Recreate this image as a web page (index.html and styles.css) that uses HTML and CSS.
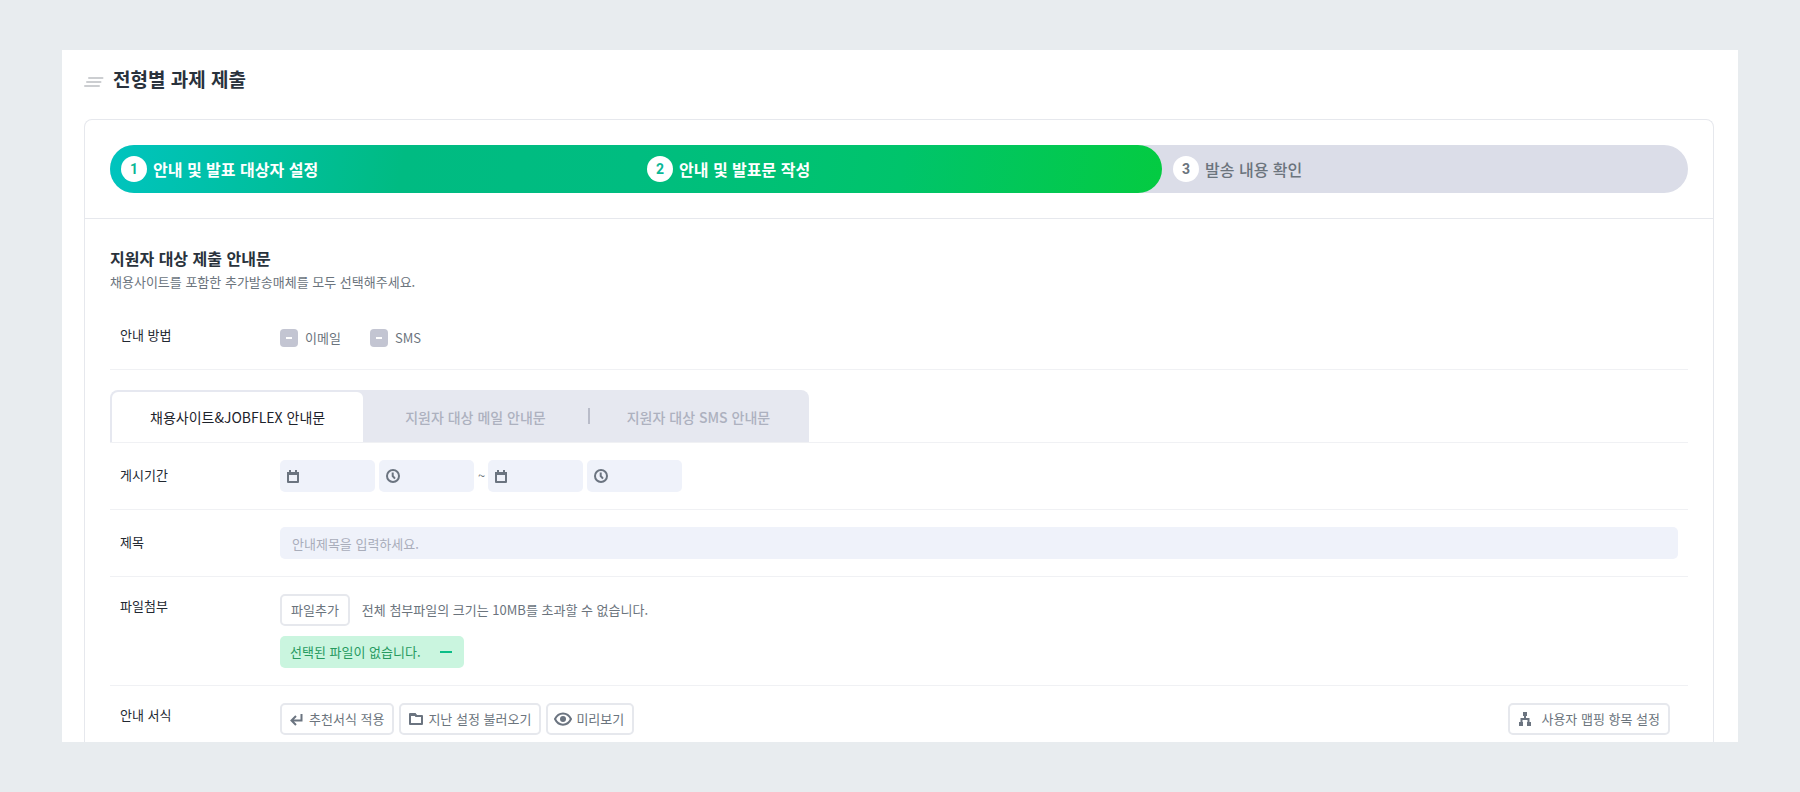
FILE: index.html
```html
<!DOCTYPE html>
<html lang="ko">
<head>
    <meta charset="UTF-8">
    <meta name="viewport" content="width=device-width, initial-scale=1.0">
    <title>전형별 과제 제출</title>
    <link rel="stylesheet" href="styles.css">
</head>
<body>
    <main class="page">
        <header class="page-header">
            <svg class="title-icon" width="20" height="12" viewBox="0 0 20 12">
                <path d="M5 2H18.500M3 6H16.500M1 10H15" stroke="#ccced1" stroke-width="2" stroke-linecap="round"/>
            </svg>
            <h1>전형별 과제 제출</h1>
        </header>
        <div class="card">
            <div class="card-top">
                <ol class="steps">
                    <li class="step done"><span class="num">1</span>안내 및 발표 대상자 설정</li>
                    <li class="step done"><span class="num">2</span>안내 및 발표문 작성</li>
                    <li class="step"><span class="num">3</span>발송 내용 확인</li>
                </ol>
            </div>
            <form class="card-body">
                <h2>지원자 대상 제출 안내문</h2>
                <p class="desc">채용사이트를 포함한 추가발송매체를 모두 선택해주세요.</p>

                <div class="row method-row">
                    <span class="row-label">안내 방법</span>
                    <div class="row-content checks">
                        <label class="check"><input type="checkbox" name="email" disabled>이메일</label>
                        <label class="check"><input type="checkbox" name="sms" disabled>SMS</label>
                    </div>
                </div>

                <div class="tabs">
                    <div class="tab-list">
                        <button type="button" class="tab active">채용사이트&amp;JOBFLEX 안내문</button>
                        <button type="button" class="tab">지원자 대상 메일 안내문</button>
                        <button type="button" class="tab divided">지원자 대상 SMS 안내문</button>
                    </div>
                </div>

                <div class="row">
                    <span class="row-label">게시기간</span>
                    <div class="row-content period">
                        <label class="picker">
                            <svg width="14" height="14" viewBox="0 0 14 14"><path d="M1 4H11V13H1Z" fill="none" stroke="#6b7480" stroke-width="2" stroke-linejoin="round"/><path d="M0 3H12V6H0ZM2 1H4V4H2ZM8 1H10V4H8Z" fill="#6b7480"/></svg>
                            <input type="text" name="startDate" aria-label="시작일">
                        </label>
                        <label class="picker">
                            <svg width="14" height="14" viewBox="0 0 14 14"><circle cx="7" cy="7" r="6" fill="none" stroke="#6b7480" stroke-width="2"/><path d="M6.700 3.500V7L9 9.600" fill="none" stroke="#6b7480" stroke-width="2"/></svg>
                            <input type="text" name="startTime" aria-label="시작 시간">
                        </label>
                        <span class="tilde">~</span>
                        <label class="picker">
                            <svg width="14" height="14" viewBox="0 0 14 14"><path d="M1 4H11V13H1Z" fill="none" stroke="#6b7480" stroke-width="2" stroke-linejoin="round"/><path d="M0 3H12V6H0ZM2 1H4V4H2ZM8 1H10V4H8Z" fill="#6b7480"/></svg>
                            <input type="text" name="endDate" aria-label="종료일">
                        </label>
                        <label class="picker">
                            <svg width="14" height="14" viewBox="0 0 14 14"><circle cx="7" cy="7" r="6" fill="none" stroke="#6b7480" stroke-width="2"/><path d="M6.700 3.500V7L9 9.600" fill="none" stroke="#6b7480" stroke-width="2"/></svg>
                            <input type="text" name="endTime" aria-label="종료 시간">
                        </label>
                    </div>
                </div>

                <div class="row">
                    <label class="row-label" for="subject">제목</label>
                    <div class="row-content">
                        <input type="text" class="text-input" id="subject" name="subject" placeholder="안내제목을 입력하세요.">
                    </div>
                </div>

                <div class="row button-row">
                    <span class="row-label">파일첨부</span>
                    <div class="row-content">
                        <div class="file-line">
                            <button type="button" class="button">파일추가</button>
                            <span>전체 첨부파일의 크기는 10MB를 초과할 수 없습니다.</span>
                        </div>
                        <div class="file-empty">
                            선택된 파일이 없습니다.
                            <svg width="12" height="2" viewBox="0 0 12 2"><path d="M0 1H12" stroke="#0bbd87" stroke-width="2"/></svg>
                        </div>
                    </div>
                </div>

                <div class="row button-row last-row">
                    <span class="row-label">안내 서식</span>
                    <div class="row-content form-buttons">
                        <button type="button" class="button icon-button">
                            <svg width="14" height="14" viewBox="0 0 14 14"><path d="M11.500 2V8.500H2M6 4L1.500 8.500L6 13" fill="none" stroke="#6b7480" stroke-width="2"/></svg>
                            추천서식 적용
                        </button>
                        <button type="button" class="button icon-button">
                            <svg width="14" height="14" viewBox="0 0 14 14"><path d="M1 2V12H13V4H7L6 2Z" fill="none" stroke="#6b7480" stroke-width="2" stroke-linejoin="round"/><path d="M1 1H6L8 3V4H1Z" fill="#6b7480"/></svg>
                            지난 설정 불러오기
                        </button>
                        <button type="button" class="button icon-button preview">
                            <svg width="18" height="14" viewBox="0 0 18 14"><path d="M1 7C4.600-.5 13.400-.5 17 7C13.400 14.500 4.600 14.500 1 7Z" fill="none" stroke="#6b7480" stroke-width="2"/><circle cx="9" cy="7" r="3" fill="#6b7480"/></svg>
                            미리보기
                        </button>
                        <button type="button" class="button icon-button mapping">
                            <svg width="14" height="14" viewBox="0 0 14 14"><path d="M5 0H9V4H8V6H11.500V10H13V14H9V10H9.500V8H4.500V10H5V14H1V10H2.500V6H6V4H5Z" fill="#6b7480"/></svg>
                            사용자 맵핑 항목 설정
                        </button>
                    </div>
                </div>
            </form>
        </div>
    </main>
</body>
</html>
```

FILE: styles.css
```css
* {
    box-sizing: border-box;
}
body {
    margin: 50px 62px;
    background: #e8ecef;
    color: #6b747d;
    font-family: "Noto Sans CJK KR", sans-serif;
    font-size: 13px;
    line-height: 20px;
}
button,
input {
    font: inherit;
    color: inherit;
}
svg {
    flex: none;
}
.page {
    background: #fff;
    padding: 0 24px 0 22px;
}
.page-header {
    display: flex;
    align-items: center;
    gap: 9px;
    height: 69px;
    padding-bottom: 12px;
}
.title-icon {
    margin-top: 6px;
}
h1 {
    margin: 0;
    font-size: 19px;
    line-height: 28px;
    font-weight: 700;
    color: #29323c;
}
.card {
    border: 1px solid #e6e8ed;
    border-bottom: none;
    border-radius: 8px 8px 0 0;
}
.card-top {
    padding: 25px;
    border-bottom: 1px solid #e6e8ed;
}
.steps {
    position: relative;
    display: grid;
    grid-template-columns: repeat(3, 1fr);
    height: 48px;
    margin: 0;
    padding: 0;
    list-style: none;
    border-radius: 24px;
    background: #dbdde8;
}
/* completed part of the bar */
.steps::before {
    content: "";
    position: absolute;
    inset: 0 33.333% 0 0;
    border-radius: 24px;
    background: linear-gradient(100deg, #00c4bf 0%, #00bb82 28%, #00bd80 50%, #00c46b 75%, #04cb41 100%);
}
.step {
    position: relative;
    display: flex;
    align-items: center;
    gap: 6px;
    padding-left: 11px;
    font-size: 16px;
    font-weight: 500;
}
.step.done {
    color: #fff;
    font-weight: 700;
}
.num {
    width: 26px;
    height: 26px;
    border-radius: 50%;
    background: #fff;
    font-family: Roboto, sans-serif;
    font-size: 14px;
    font-weight: 700;
    line-height: 26px;
    text-align: center;
}
.done .num {
    color: #0bb796;
}
.card-body {
    padding: 27px 25px 0;
}
h2 {
    margin: 0;
    font-size: 16px;
    line-height: 24px;
    font-weight: 700;
    color: #29323c;
}
.desc {
    margin: 2px 0 0;
}
.row {
    display: flex;
    padding: 17px 10px;
    border-bottom: 1px solid #f0f1f4;
}
.row-label {
    width: 160px;
    padding-top: 5px;
    color: #222831;
}
.row-content {
    flex: 1;
}
.method-row {
    padding: 33px 10px 21px;
}
.method-row .row-label {
    padding-top: 0;
}
.button-row .row-label {
    padding-top: 2px;
}
.checks {
    display: flex;
    gap: 29px;
    padding-top: 3px;
}
.check {
    display: flex;
    align-items: center;
    gap: 7px;
}
.check input {
    appearance: none;
    width: 18px;
    height: 18px;
    margin: 0;
    border-radius: 4px;
    background: linear-gradient(#fff, #fff) center / 6px 2px no-repeat #c3c5d2;
}
.tabs {
    margin-top: 20px;
    border-bottom: 1px solid #f0f1f4;
}
.tab-list {
    display: inline-flex;
    vertical-align: top;
    height: 52px;
    padding: 2px 0 0 2px;
    border-radius: 8px 8px 0 0;
    background: #e6e8f0;
}
.tab {
    position: relative;
    padding: 0 42px;
    border: none;
    background: none;
    color: #adb1bf;
    font-size: 14px;
    font-weight: 500;
}
.tab.active {
    padding: 0 38px;
    border-radius: 6px 6px 0 0;
    background: #fff;
    color: #1d222b;
    font-weight: 400;
}
.tab.divided {
    padding: 0 39px;
}
.tab.divided::before {
    content: "";
    position: absolute;
    left: 0;
    top: 16px;
    width: 2px;
    height: 16px;
    background: #b9bcc9;
}
.period {
    display: flex;
    gap: 4px;
}
.picker {
    display: flex;
    align-items: center;
    width: 95px;
    height: 32px;
    padding: 0 7px;
    border-radius: 5px;
    background: #eff2fa;
}
.picker input {
    flex: 1;
    min-width: 0;
    border: none;
    outline: none;
    background: none;
}
.tilde {
    width: 6px;
    font-size: 13px;
    line-height: 32px;
}
.text-input {
    display: block;
    width: 100%;
    height: 32px;
    padding: 0 12px;
    border: none;
    border-radius: 5px;
    background: #eff2fa;
}
.text-input::placeholder {
    color: #a9adba;
}
.button {
    display: inline-flex;
    align-items: center;
    height: 32px;
    padding: 0 9px;
    border: 2px solid #e6e8ed;
    border-radius: 5px;
    background: #fff;
    cursor: pointer;
}
.icon-button {
    gap: 5px;
    padding: 0 8px;
}
.file-line {
    display: flex;
    align-items: center;
    gap: 12px;
}
.file-empty {
    display: inline-flex;
    align-items: center;
    gap: 19px;
    height: 32px;
    margin-top: 10px;
    padding: 0 12px 0 10px;
    border-radius: 5px;
    background: #caf5df;
    color: #279a5f;
    vertical-align: top;
}
.form-buttons {
    display: flex;
    gap: 5px;
}
.preview {
    padding: 0 8px 0 6px;
    gap: 4px;
}
.mapping {
    gap: 9px;
    margin-left: auto;
    margin-right: 8px;
}
.last-row {
    padding-bottom: 7px;
    border-bottom: none;
}
```
